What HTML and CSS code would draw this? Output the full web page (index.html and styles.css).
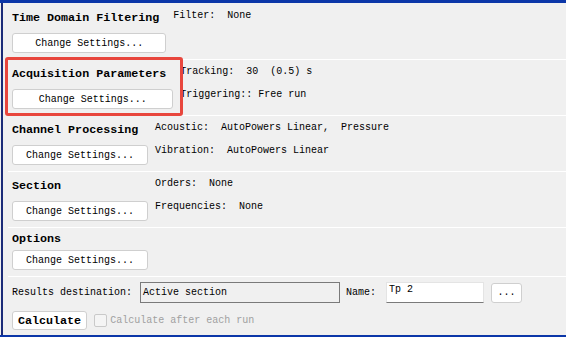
FILE: index.html
```html
<!DOCTYPE html>
<html lang="en">
<head>
    <meta charset="UTF-8">
    <meta name="viewport" content="width=device-width, initial-scale=1.0">
    <title>Section Processing</title>
    <link rel="stylesheet" href="styles.css">
</head>
<body>
    <div class="window">
        <div class="panel">

            <div class="row first">
                <div class="left">
                    <div class="heading">Time Domain Filtering</div>
                    <button class="settings">Change Settings...</button>
                </div>
                <div class="info">
                    <div class="item">Filter:  None</div>
                </div>
            </div>

            <div class="row">
                <div class="left">
                    <div class="heading">Acquisition Parameters</div>
                    <button class="settings">Change Settings...</button>
                </div>
                <div class="info">
                    <div class="item">Tracking:  30  (0.5) s</div>
                    <div class="item">Triggering:: Free run</div>
                </div>
            </div>

            <div class="row">
                <div class="left">
                    <div class="heading">Channel Processing</div>
                    <button class="settings">Change Settings...</button>
                </div>
                <div class="info">
                    <div class="item">Acoustic:  AutoPowers Linear,  Pressure</div>
                    <div class="item">Vibration:  AutoPowers Linear</div>
                </div>
            </div>

            <div class="row">
                <div class="left">
                    <div class="heading">Section</div>
                    <button class="settings">Change Settings...</button>
                </div>
                <div class="info">
                    <div class="item">Orders:  None</div>
                    <div class="item">Frequencies:  None</div>
                </div>
            </div>

            <div class="row short">
                <div class="left">
                    <div class="heading">Options</div>
                    <button class="settings">Change Settings...</button>
                </div>
            </div>

            <div class="results">
                <div class="line">
                    <span class="label">Results destination:</span>
                    <div class="field readonly">Active section</div>
                    <span class="label name-label">Name:</span>
                    <div class="field name">Tp 2</div>
                    <button class="browse">...</button>
                </div>
                <div class="line">
                    <button class="calc">Calculate</button>
                    <span class="check"></span>
                    <span class="check-label">Calculate after each run</span>
                </div>
            </div>

        </div>
    </div>

    <div class="highlight"></div>
</body>
</html>
```

FILE: styles.css
```css
html, body {
    margin: 0;
    padding: 0;
}

body {
    position: relative;
    width: 566px;
    height: 337px;
    overflow: hidden;
    background-color: #f0f0f0;
    font-family: 'Liberation Mono', 'DejaVu Sans Mono', monospace;
    font-size: 10px;
    color: #000;
}

.window {
    height: 337px;
    box-sizing: border-box;
    border-top: 3px solid #0b36a8;
    border-bottom: 2px solid #0b36a8;
}

.panel {
    height: 100%;
    margin-left: 1px;
    border-left: 2px solid #1b2b78;
}

.row {
    display: flex;
    gap: 7px;
    margin-left: 5px;
    padding-left: 4px;
    border-bottom: 1px solid #ffffff;
}

.left {
    display: flex;
    flex-direction: column;
    align-items: stretch;
    min-width: 136px;
    padding: 6px 0 6px;
}

.row.first .left {
    padding-top: 7px;
}

.row.first .info {
    padding-top: 1px;
}

.heading {
    font-weight: bold;
    font-size: 11.7px;
    line-height: 16px;
    padding-right: 7px;
    white-space: nowrap;
}

.settings {
    margin-top: 7px;
    height: 20px;
    padding: 0;
    font-family: inherit;
    font-size: 10px;
    color: #000;
    background-color: #ffffff;
    border: 1px solid #cfcfcf;
    border-radius: 3px;
}

.row.short .left {
    padding-top: 3px;
}

.row.short .settings {
    margin-top: 3px;
}

.info {
    line-height: 23px;
}

.item {
    white-space: pre;
}

.results {
    margin-left: 5px;
    padding: 5px 0 0 4px;
}

.line {
    display: flex;
    align-items: center;
}

.line + .line {
    margin-top: 8px;
}

.label {
    margin-right: 8px;
    white-space: pre;
}

.name-label {
    margin-left: 6px;
    margin-right: 10px;
}

.field {
    box-sizing: border-box;
    height: 21px;
    padding: 0 2px;
    line-height: 19px;
    white-space: pre;
}

.readonly {
    width: 200px;
    border: 1px solid #7a7a7a;
    background-color: #f0f0f0;
}

.name {
    width: 98px;
    line-height: 14px;
    background-color: #ffffff;
    border: 1px solid #e4e4e4;
    border-bottom-color: #7a7a7a;
}

.browse {
    margin-left: 7px;
    width: 31px;
    height: 20px;
    padding: 0;
    font-family: inherit;
    font-size: 10px;
    color: #000;
    background-color: #ffffff;
    border: 1px solid #cfcfcf;
    border-radius: 3px;
}

.calc {
    height: 19px;
    padding: 0 5px;
    font-family: inherit;
    font-weight: bold;
    font-size: 11.7px;
    color: #000;
    background-color: #ffffff;
    border: 1px solid #cfcfcf;
    border-radius: 3px;
}

.check {
    box-sizing: border-box;
    width: 13px;
    height: 13px;
    margin-left: 7px;
    border: 1px solid #c9c9c9;
    border-radius: 2px;
    background-color: #f4f4f4;
}

.check-label {
    margin-left: 3px;
    color: #a0a0a0;
    white-space: pre;
}

.highlight {
    position: absolute;
    left: 5px;
    top: 57px;
    width: 178px;
    height: 59px;
    box-sizing: border-box;
    border: 3px solid #e8463d;
    border-radius: 3px;
}
```
